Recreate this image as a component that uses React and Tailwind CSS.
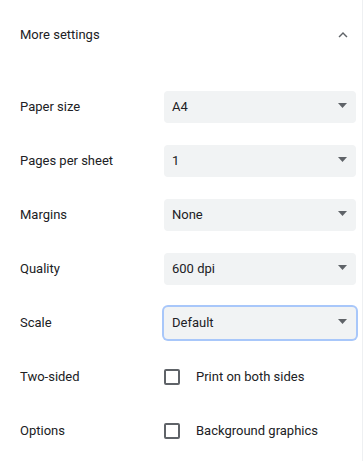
import React from 'react'

const font = { fontFamily: 'Roboto, "Liberation Sans", sans-serif' }

function Select({ value, focused }) {
  return (
    <div
      className={`w-[192px] h-8 rounded bg-[#f1f3f4] flex items-center justify-between pl-2 pr-[9px] text-[13px] text-[#202124] ${
        focused ? 'ring-2 ring-[#a8c7fa]' : ''
      }`}
    >
      <span>{value}</span>
      <svg width="9" height="5" viewBox="0 0 9 5" className="mt-[-3px]">
        <polygon points="0,0 9,0 4.5,5" fill="#5f6368" />
      </svg>
    </div>
  )
}

function Checkbox({ label }) {
  return (
    <div className="flex items-center gap-4 text-[13px] text-[#202124]">
      <div className="w-4 h-4 border-2 border-[#5f6368] rounded-[2px]" />
      <span>{label}</span>
    </div>
  )
}

function Row({ label, children }) {
  return (
    <div className="h-8 flex items-center">
      <div className="w-[164px] shrink-0 pl-5 text-[13px] text-[#202124]">{label}</div>
      {children}
    </div>
  )
}

export default function App() {
  return (
    <div className="w-[364px] h-[461px] bg-white flex overflow-hidden" style={font}>
      <div className="w-[362px] flex flex-col">
        {/* Header */}
        <div className="h-[70px] flex items-center justify-between pl-5 pr-[10px]">
          <span className="text-[13px] text-[#202124]">More settings</span>
          <svg width="18" height="18" viewBox="0 0 24 24">
            <path d="M12 8l-6 6 1.41 1.41L12 10.83l4.59 4.58L18 14z" fill="#5f6368" />
          </svg>
        </div>

        <div className="mt-[21px] flex flex-col gap-[22px]">
          <Row label="Paper size">
            <Select value="A4" />
          </Row>
          <Row label="Pages per sheet">
            <Select value="1" />
          </Row>
          <Row label="Margins">
            <Select value="None" />
          </Row>
          <Row label="Quality">
            <Select value="600 dpi" />
          </Row>
          <Row label="Scale">
            <Select value="Default" focused />
          </Row>
          <Row label="Two-sided">
            <Checkbox label="Print on both sides" />
          </Row>
          <Row label="Options">
            <Checkbox label="Background graphics" />
          </Row>
        </div>
      </div>
      <div className="w-px h-full bg-[#eef0f2]" />
    </div>
  )
}
